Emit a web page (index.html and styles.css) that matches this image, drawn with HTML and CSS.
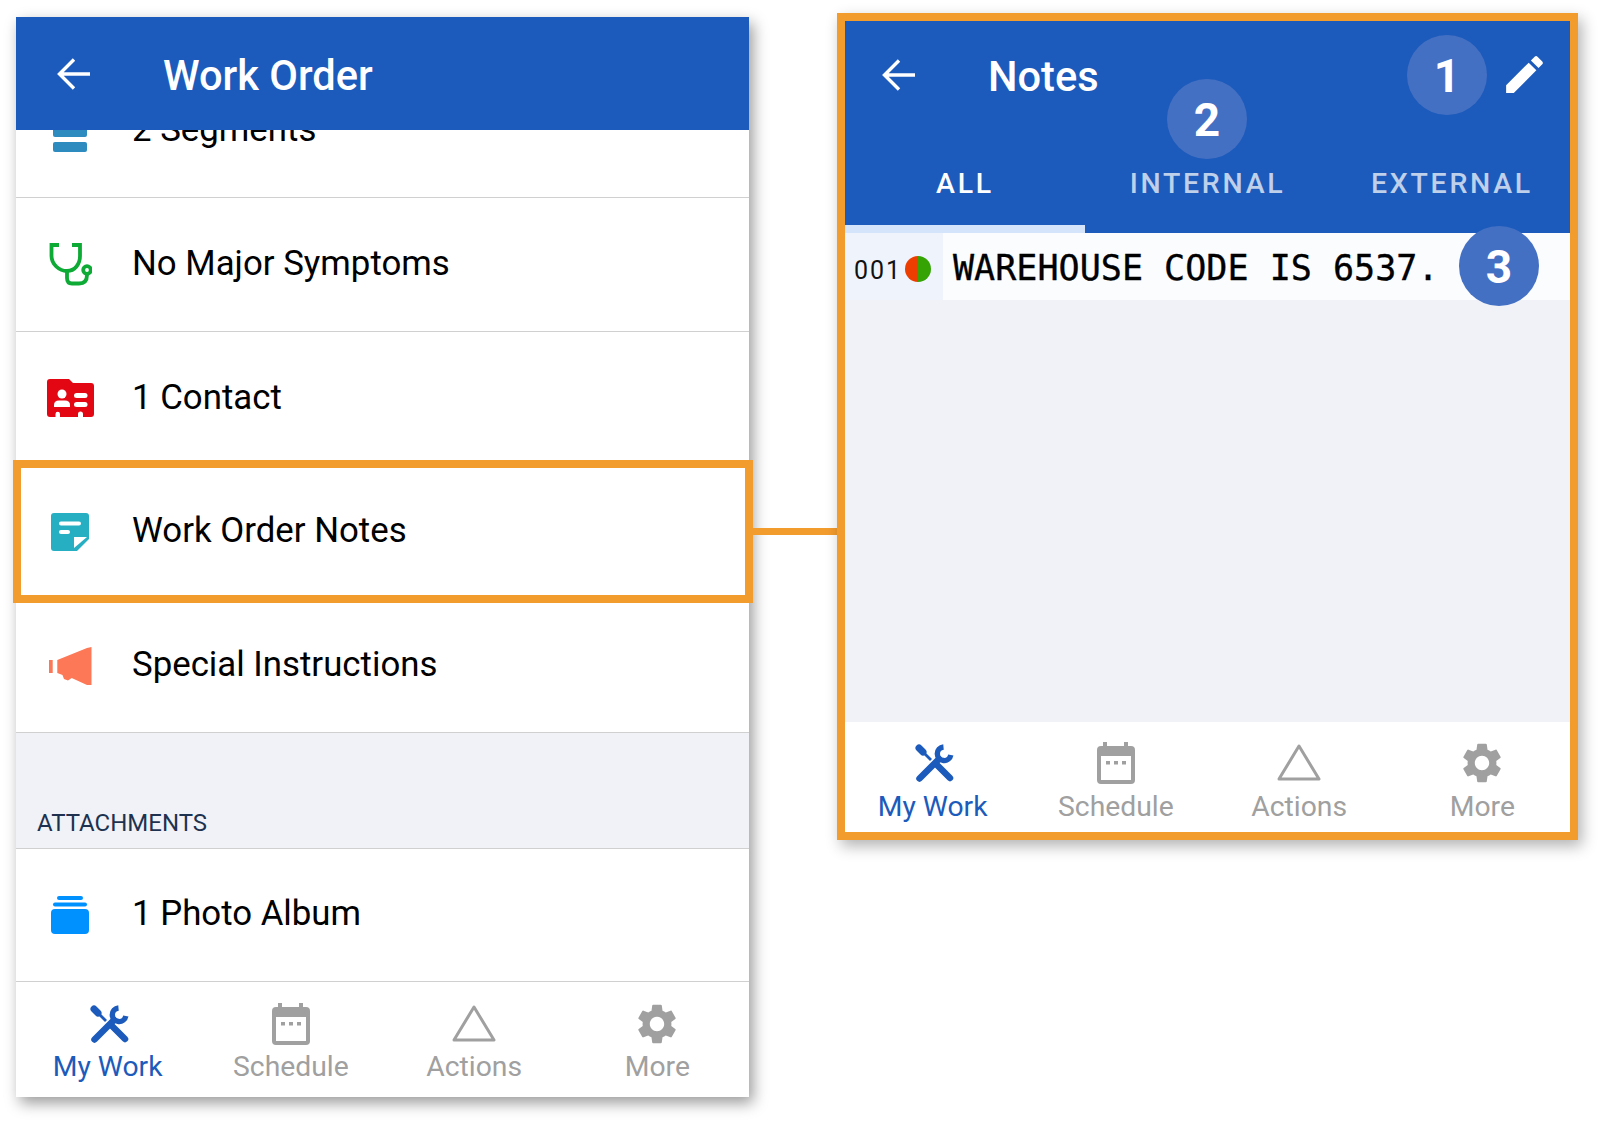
FILE: index.html
```html
<!DOCTYPE html>
<html lang="en">
<head>
<meta charset="utf-8">
<title>Work Order Notes</title>
<link rel="stylesheet" href="styles.css">
</head>
<body>
<svg class="defs" aria-hidden="true">
  <symbol id="i-back" viewBox="0 0 34 34"><path d="M33 17H3M17 2.500 2.500 17 17 31.500" fill="none" stroke="currentColor" stroke-width="3.400"/></symbol>
  <symbol id="i-tools" viewBox="0 0 40 40">
    <g fill="none" stroke="currentColor" stroke-linecap="round">
      <path d="M4 5 8 9" stroke-width="7"/>
      <path d="M8 9 16 17" stroke-width="2.800" stroke-linecap="butt"/>
      <path d="M21 21 35 35" stroke-width="6.500"/>
      <path d="M4.500 35.500 24 16" stroke-width="6.500"/>
      <path d="M28.500 4A6.800 6.800 0 1 0 35.800 12" stroke-width="5.400" stroke-linecap="butt"/>
    </g>
  </symbol>
  <symbol id="i-cal" viewBox="0 0 38 42">
    <path fill="currentColor" d="M6 0h4v4h17V0h4v4h3a4 4 0 0 1 4 4v30a4 4 0 0 1-4 4H4a4 4 0 0 1-4-4V8a4 4 0 0 1 4-4h2z"/>
    <rect x="4" y="14" width="30" height="24" fill="#fff"/>
    <rect x="9" y="19" width="4" height="3.500" fill="currentColor"/>
    <rect x="17" y="19" width="4" height="3.500" fill="currentColor"/>
    <rect x="25" y="19" width="4" height="3.500" fill="currentColor"/>
  </symbol>
  <symbol id="i-tri" viewBox="0 0 44 38"><path d="M22 2 42 35H2z" fill="none" stroke="currentColor" stroke-width="3" stroke-linejoin="round"/></symbol>
  <symbol id="i-gear" viewBox="2 2 20 20"><path fill="currentColor" d="M19.140 12.940c.04-.3.06-.61.06-.94 0-.32-.02-.64-.07-.94l2.030-1.580c.18-.14.23-.41.12-.61l-1.920-3.320c-.12-.22-.37-.29-.59-.22l-2.390.96c-.5-.38-1.030-.7-1.620-.94l-.36-2.540c-.04-.24-.24-.41-.48-.41h-3.840c-.24 0-.43.17-.47.41l-.36 2.540c-.59.24-1.130.57-1.620.94l-2.390-.96c-.22-.08-.47 0-.59.22L2.740 8.870c-.12.21-.08.47.12.61l2.030 1.580c-.05.3-.09.63-.09.94s.02.64.07.94l-2.030 1.580c-.18.14-.23.41-.12.61l1.920 3.320c.12.22.37.29.59.22l2.390-.96c.5.38 1.030.7 1.620.94l.36 2.540c.05.24.24.41.48.41h3.840c.24 0 .44-.17.47-.41l.36-2.540c.59-.24 1.130-.56 1.620-.94l2.390.96c.22.08.47 0 .59-.22l1.920-3.320c.12-.22.07-.47-.12-.61l-2.010-1.580zM12 15.600c-1.980 0-3.600-1.620-3.600-3.600s1.620-3.600 3.600-3.600 3.600 1.620 3.600 3.600-1.620 3.600-3.600 3.600z"/></symbol>
</svg>

<main class="page">
  <section class="phone">
    <header class="appbar">
      <svg class="back"><use href="#i-back"/></svg>
      <h1 class="title">Work Order</h1>
    </header>
    <div class="list">
      <div class="row row-clipped">
        <span class="row-icon">
          <svg class="ico" width="34" height="44" viewBox="0 0 34 44"><rect y="3" width="34" height="10" rx="2" fill="#2e8bc0"/><rect y="18" width="34" height="10" rx="2" fill="#2e8bc0"/><rect y="33" width="34" height="10" rx="2" fill="#2e8bc0"/></svg>
        </span>
        <span class="row-text">2 Segments</span>
      </div>
      <div class="row">
        <span class="row-icon">
          <svg class="ico" width="43" height="43" viewBox="0 0 43 43"><g fill="none" stroke="#0eaa36" stroke-width="3.800"><path d="M10 2H2.500V13C2.500 21 10 28 18 28S31 21 31 13V2H23"/><path d="M18 28V35Q18 40.500 23 40.500H30Q38 40.500 38 32"/><circle cx="38" cy="27" r="3.800"/></g></svg>
        </span>
        <span class="row-text">No Major Symptoms</span>
      </div>
      <div class="row">
        <span class="row-icon">
          <svg class="ico" width="47" height="38" viewBox="0 0 47 38"><path fill="#e30613" d="M3 0H22L26 4H44A3 3 0 0 1 47 7V35A3 3 0 0 1 44 38H39L36 38V35A2 2 0 0 0 31 35V38H13V35A2 2 0 0 0 8.500 35V38H3A3 3 0 0 1 0 35V3A3 3 0 0 1 3 0Z"/><circle cx="15" cy="15" r="4.500" fill="#fff"/><path fill="#fff" d="M7 28V26Q7 21.500 12 21.500H18Q23 21.500 23 26V28Z"/><rect x="27" y="14" width="13.500" height="5" rx="2.500" fill="#fff"/><rect x="27" y="23" width="13.500" height="5" rx="2.500" fill="#fff"/></svg>
        </span>
        <span class="row-text">1 Contact</span>
      </div>
      <div class="row">
        <span class="row-icon">
          <svg class="ico" width="38" height="38" viewBox="0 0 38 38"><path fill="#26afc3" d="M3 0H35A3 3 0 0 1 38 3V26L26 38H3A3 3 0 0 1 0 35V3A3 3 0 0 1 3 0Z"/><rect x="8" y="8.500" width="22" height="4" rx="2" fill="#fff"/><rect x="8" y="17" width="11" height="4" rx="2" fill="#fff"/><path fill="#fff" d="M23 24H36L23 35Z"/></svg>
        </span>
        <span class="row-text">Work Order Notes</span>
      </div>
      <div class="row">
        <span class="row-icon">
          <svg class="ico" width="43" height="38" viewBox="0 0 43 38"><path fill="#fc7857" d="M0 13H3.700V26H0ZM8.300 13 38 1 42.500 0V38H38L22.700 31 19 33.500 15 32 13.500 28 8.300 26Z"/></svg>
        </span>
        <span class="row-text">Special Instructions</span>
      </div>
      <div class="section"><span class="section-label">ATTACHMENTS</span></div>
      <div class="row">
        <span class="row-icon">
          <svg class="ico" width="38" height="38" viewBox="0 0 38 38"><rect x="6" y="0" width="26" height="4" rx="2" fill="#0091ff"/><rect x="2" y="6.500" width="34" height="4" rx="2" fill="#0091ff"/><rect y="13" width="38" height="25" rx="4" fill="#0091ff"/></svg>
        </span>
        <span class="row-text">1 Photo Album</span>
      </div>
    </div>
    <nav class="tabbar">
      <a class="tab active"><svg class="tab-ico tools"><use href="#i-tools"/></svg><span>My Work</span></a>
      <a class="tab"><svg class="tab-ico cal"><use href="#i-cal"/></svg><span>Schedule</span></a>
      <a class="tab"><svg class="tab-ico tri"><use href="#i-tri"/></svg><span>Actions</span></a>
      <a class="tab"><svg class="tab-ico"><use href="#i-gear"/></svg><span>More</span></a>
    </nav>
    <div class="highlight"></div>
  </section>

  <section class="notes">
    <header class="notes-bar">
      <div class="notes-top">
        <svg class="back"><use href="#i-back"/></svg>
        <h1 class="title">Notes</h1>
        <svg class="edit" viewBox="0 0 24 24"><path fill="#fff" d="M3 17.250V21h3.750L17.810 9.940l-3.750-3.750L3 17.250zM20.710 7.040c.39-.39.39-1.020 0-1.410l-2.340-2.340c-.39-.39-1.020-.39-1.410 0l-1.830 1.830 3.750 3.750 1.830-1.830z"/></svg>
      </div>
      <div class="notes-tabs">
        <span class="ntab on">ALL</span>
        <span class="ntab">INTERNAL</span>
        <span class="ntab ext">EXTERNAL</span>
      </div>
    </header>
    <div class="notes-body">
      <div class="note">
        <div class="note-meta"><span class="note-num">001</span><span class="dot"></span></div>
        <div class="note-text">WAREHOUSE CODE IS 6537.</div>
      </div>
    </div>
    <nav class="tabbar tabbar-flat">
      <a class="tab active"><svg class="tab-ico tools"><use href="#i-tools"/></svg><span>My Work</span></a>
      <a class="tab"><svg class="tab-ico cal"><use href="#i-cal"/></svg><span>Schedule</span></a>
      <a class="tab"><svg class="tab-ico tri"><use href="#i-tri"/></svg><span>Actions</span></a>
      <a class="tab"><svg class="tab-ico"><use href="#i-gear"/></svg><span>More</span></a>
    </nav>
    <span class="badge b1">1</span>
    <span class="badge b2">2</span>
    <span class="badge b3">3</span>
  </section>
</main>
</body>
</html>
```

FILE: styles.css
```css
* { box-sizing: border-box; }
html, body { margin: 0; padding: 0; }
body {
  width: 1600px;
  height: 1123px;
  background: #fff;
  overflow: hidden;
  font-family: Roboto, "Liberation Sans", sans-serif;
  color: #000;
}
.defs { position: absolute; width: 0; height: 0; }
.page {
  display: flex;
  align-items: flex-start;
  gap: 88px;
  padding: 13px 0 0 16px;
}

/* left phone */
.phone {
  position: relative;
  width: 733px;
  height: 1080px;
  margin-top: 4px;
  display: flex;
  flex-direction: column;
  background: #fff;
  box-shadow: 4px 6px 14px rgba(0, 0, 0, .4);
}
.appbar {
  flex: none;
  height: 113px;
  display: flex;
  align-items: center;
  padding-left: 41px;
  background: #1c5bbb;
  color: #fff;
}
.back { flex: none; width: 34px; height: 34px; color: #fff; }
.title {
  margin: 0 0 0 72px;
  padding-top: 4px;
  font-size: 41.600px;
  font-weight: 500;
  line-height: 1;
  color: #fff;
}
.list { flex: 1; overflow: hidden; min-height: 0; }
.row {
  height: 133.750px;
  display: flex;
  align-items: center;
  border-bottom: 1.500px solid #d0d0d0;
  background: #fff;
}
.row-clipped { margin-top: -65.750px; }
.row-icon {
  flex: none;
  width: 108px;
  margin-right: 8px;
  display: flex;
  justify-content: center;
}
.ico { display: block; }
.row-text { margin-bottom: 2px; font-size: 34.800px; line-height: 1; }
.section {
  height: 115.500px;
  display: flex;
  align-items: flex-end;
  padding: 0 0 13px 21px;
  background: #f0f2f7;
  border-bottom: 1.500px solid #d0d0d0;
}
.section-label { font-size: 24px; line-height: 1; color: #1e3250; }

/* tab bars */
.tabbar {
  flex: none;
  height: 114px;
  display: grid;
  grid-template-columns: repeat(4, 183.250px);
  justify-content: center;
  background: #fff;
}
.tabbar-flat { height: 110px; }
.tab {
  display: flex;
  flex-direction: column;
  align-items: center;
  padding-top: 20px;
  color: #a0a0a0;
  font-size: 28.300px;
  line-height: 34px;
}
.tab.active { color: #1c5bbb; }
.tab-ico { display: block; width: 40px; height: 42px; margin-bottom: 5px; }
.tabbar-flat .tab-ico { margin-bottom: 6px; }
.tab-ico.cal { width: 38px; }
.tab-ico.tri { width: 44px; }
.tab-ico.tools { margin-left: 4px; }

.highlight {
  position: absolute;
  left: -3px;
  top: 443px;
  width: 740px;
  height: 143px;
  border: 8px solid #f39c2e;
}
.highlight::after {
  content: "";
  position: absolute;
  left: 732px;
  top: 60px;
  width: 85px;
  height: 7px;
  background: #f39c2e;
}

/* right notes panel */
.notes {
  position: relative;
  flex: none;
  width: 741px;
  height: 827px;
  display: flex;
  flex-direction: column;
  border: 8px solid #f39c2e;
  background: #f0f2f7;
  box-shadow: 4px 6px 14px rgba(0, 0, 0, .3);
}
.notes-bar { flex: none; height: 212px; background: #1c5bbb; }
.notes-top {
  height: 107px;
  display: flex;
  align-items: center;
  padding-left: 37px;
}
.edit { width: 49px; height: 49px; margin-left: auto; margin-right: 21px; }
.notes-tabs {
  height: 105px;
  display: grid;
  grid-template-columns: 240px 245px 240px;
}
.ntab {
  display: flex;
  justify-content: center;
  padding-top: 39px;
  font-size: 28.500px;
  line-height: 34px;
  font-weight: 500;
  letter-spacing: 2.700px;
  color: rgba(255, 255, 255, .72);
}
.ntab.ext { padding-left: 4px; }
.ntab.on { color: #fff; border-bottom: 8px solid #d4e4fb; }
.notes-body { flex: 1; min-height: 0; }
.note { height: 67px; display: flex; background: #fbfcfe; }
.note-meta {
  flex: none;
  width: 98px;
  display: flex;
  align-items: center;
  padding: 4px 0 0 9px;
  background: #eef3fc;
}
.note-num { margin-top: 4px; font-size: 25px; letter-spacing: 2px; color: #111; }
.dot {
  width: 26px;
  height: 26px;
  margin-left: 3px;
  border-radius: 50%;
  background: linear-gradient(90deg, #ee3d00 50%, #34a303 50%);
}
.note-text {
  display: flex;
  align-items: center;
  padding: 2px 0 0 10px;
  font-family: "DejaVu Sans Mono", "Liberation Mono", monospace;
  font-size: 35.070px;
  -webkit-text-stroke: .35px #000;
  white-space: pre;
}
.badge {
  position: absolute;
  width: 80px;
  height: 80px;
  display: flex;
  align-items: center;
  justify-content: center;
  padding-top: 2px;
  border-radius: 50%;
  background: #4470c4;
  color: #fff;
  font-size: 46px;
  font-weight: 700;
  line-height: 1;
}
.b1 { left: 562px; top: 14px; }
.b2 { left: 322px; top: 58px; }
.b3 { left: 614px; top: 205px; }
```
